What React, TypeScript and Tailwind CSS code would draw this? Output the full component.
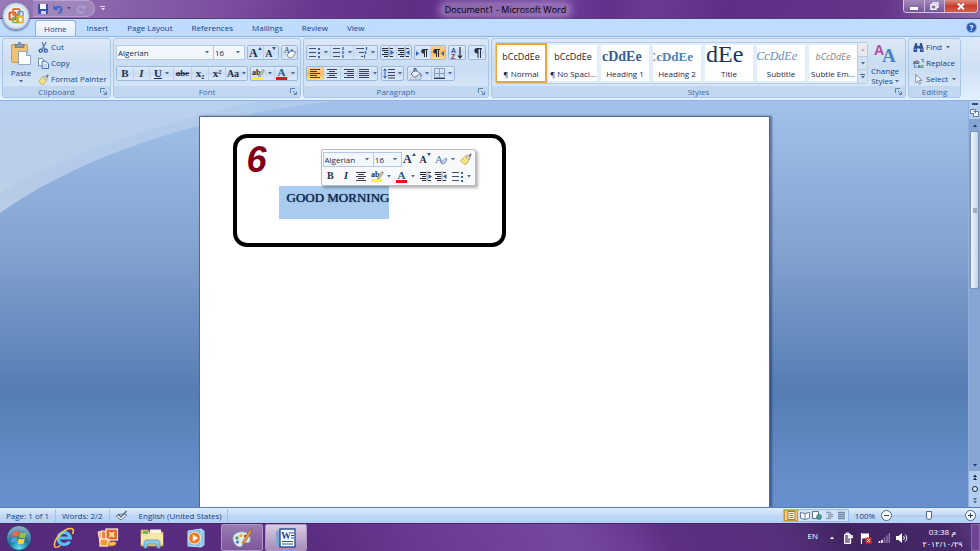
import React from 'react';
import clsx from 'clsx';

interface ChildrenProps {
  children?: React.ReactNode;
}

/* ---------- small building blocks ---------- */

const Caret = ({ className = 'text-[#4a6898]' }: { className?: string }) => (
  <svg viewBox="0 0 4 3" className={clsx('w-1 h-[3px] shrink-0', className)}>
    <path d="M0 0h4L2 2.500z" fill="currentColor" />
  </svg>
);

const Icon = ({ box = '0 0 12 12', className = 'w-3 h-3', children }: ChildrenProps & { box?: string; className?: string }) => (
  <svg viewBox={box} className={clsx('shrink-0', className)} fill="none">
    {children}
  </svg>
);

interface ToolProps extends ChildrenProps {
  label: string;
  arrow?: boolean;
  active?: boolean;
  className?: string;
}

const Tool = ({ label, arrow, active, className = 'flex-1', children }: ToolProps) => (
  <button
    type="button"
    aria-label={label}
    title={label}
    className={clsx(
      'h-full flex items-center justify-center gap-[3px] border-l border-[#bfd2ea] first:border-l-0',
      active && 'bg-linear-to-b from-[#fbd49a] via-[#fdb55b] to-[#fddf8e]',
      className,
    )}
  >
    {children}
    {arrow && <Caret />}
  </button>
);

const ToolSet = ({ className, children }: ChildrenProps & { className?: string }) => (
  <div className={clsx('h-[15px] flex items-stretch rounded-[2px] border border-[#9cb8dc] bg-linear-to-b from-[#dfebf9] via-[#c9dcf3] to-[#dbe9fa] overflow-hidden', className)}>
    {children}
  </div>
);

const Launcher = ({ label }: { label: string }) => (
  <button type="button" aria-label={label} className="absolute right-[3px] top-[2px]">
    <Icon box="0 0 7 7" className="w-[7px] h-[7px]">
      <path d="M.5 5V.5H5M3 3l3 3M6.500 3.500v3h-3" stroke="#5f83b5" />
    </Icon>
  </button>
);

const Group = ({ title, launcher, className, children }: ChildrenProps & { title: string; launcher?: boolean; className?: string }) => (
  <section
    aria-label={title}
    className={clsx('flex flex-col rounded-[3px] border border-[#a9c5e8] bg-linear-to-b from-[#dce8f6] via-[#c9dcf1] to-[#dcebfb] overflow-hidden', className)}
  >
    <div className="flex-1 min-h-0">{children}</div>
    <div className="relative h-[11px] flex items-center justify-center bg-[#c1d8f0] text-[#3e6aaa] leading-[11px]">
      {title}
      {launcher && <Launcher label={`${title} options`} />}
    </div>
  </section>
);

/* ---------- icons ---------- */

const Letter = ({ children, className }: ChildrenProps & { className?: string }) => (
  <span className={clsx('font-["Liberation_Serif",serif] font-bold leading-none text-[#1f2f4c]', className)}>{children}</span>
);

const GrowA = ({ down }: { down?: boolean }) => (
  <span className="flex items-start">
    <Letter className={down ? 'text-[10px] pt-[2px]' : 'text-[12px]'}>A</Letter>
    <Icon box="0 0 4 3" className="w-1 h-[3px]">
      <path d={down ? 'M0 0h4L2 3z' : 'M0 3h4L2 0z'} fill="#2c5799" />
    </Icon>
  </span>
);

const AlignIcon = ({ kind }: { kind: 'left' | 'center' | 'right' | 'justify' }) => {
  const short = { left: 'M1 3.500h7M1 7.500h7', center: 'M3 3.500h6M3 7.500h6', right: 'M4 3.500h7M4 7.500h7', justify: 'M1 3.500h10M1 7.500h10' }[kind];
  return (
    <Icon box="0 0 12 11" className="w-3 h-[11px]">
      <path d={`M1 1.500h10M1 5.500h10M1 9.500h10${short}`} stroke="#3d3f55" strokeWidth="1.200" />
    </Icon>
  );
};

const ListIcon = ({ kind }: { kind: 'bullets' | 'numbers' | 'levels' }) => (
  <Icon box="0 0 12 11" className="w-3 h-[11px]">
    {kind === 'levels' ? (
      <path d="M0 1.500h8M3 5.500h5M5 9.500h2" stroke="#4a4f63" strokeWidth="1.200" />
    ) : (
      <path d="M0 1.500h7M0 5.500h7M0 9.500h7" stroke="#4a4f63" strokeWidth="1.200" />
    )}
    {kind === 'bullets' && <path d="M9 1h2v2H9zM9 5h2v2H9zM9 9h2v2H9z" fill="#3465ad" />}
    {kind === 'numbers' && <path d="M10 0v3M10 4v3M10 8v3" stroke="#3465ad" strokeWidth="1.300" />}
    {kind === 'levels' && <path d="M10.500 0v3M9.500 4v3M8.500 8v3" stroke="#3465ad" strokeWidth="1.300" />}
  </Icon>
);

const IndentIcon = ({ out }: { out?: boolean }) => (
  <Icon box="0 0 12 11" className="w-3 h-[11px]">
    <path d="M0 1.500h6M0 3.500h6M2 5.500h4M0 7.500h6M2 9.500h4" stroke="#252a3a" />
    <path d="M7 .5v10" stroke="#252a3a" strokeDasharray="1 1" />
    <path d="M8 1.500h3M8 9.500h3" stroke="#252a3a" />
    <path d={out ? 'M8 5.500l3.500-2.500v5z' : 'M12 5.500L8.500 3v5z'} fill="#2b62b8" />
  </Icon>
);

const HighlightIcon = () => (
  <Icon box="0 0 13 12" className="w-[13px] h-3">
    <path d="M0 9h11v3H0z" fill="#ffff1e" />
    <text x="0" y="7" fontSize="8" fontWeight="bold" fontFamily="Liberation Serif" fill="#222d45">ab</text>
    <path d="M6.500 9l.8-3L11 1.500l1.500 1L9 7.500z" fill="#d8c58a" stroke="#6f7690" strokeWidth=".6" />
  </Icon>
);

const FontColorIcon = () => (
  <Icon box="0 0 12 13" className="w-3 h-[13px]">
    <path d="M0 10h11v3H0z" fill="#e8141c" />
    <text x="1.500" y="9" fontSize="11" fontWeight="bold" fontFamily="Liberation Serif" fill="#2d5597">A</text>
  </Icon>
);

const BrushIcon = ({ className = 'w-3 h-3' }: { className?: string }) => (
  <Icon className={className}>
    <path d="M8.500 3l2-2.800 1.200 1.100L9.700 4.500z" fill="#7f6a4a" />
    <path d="M5.500 3L8 2.200 10.300 5 9 7z" fill="#dfe6ef" stroke="#6b7890" strokeWidth=".6" />
    <path d="M5.500 3.200L9 7 6.500 11 4 11.500.5 7.500z" fill="#f2dc72" stroke="#a48427" strokeWidth=".5" />
    <path d="M2 8.500l4-3M4 10.500l3.500-4" stroke="#fff3bd" strokeWidth=".7" />
  </Icon>
);

const PasteIcon = () => (
  <Icon box="0 0 20 23" className="w-5 h-[23px]">
    <rect x=".5" y="2.500" width="16" height="18" rx="1.500" fill="#f0c273" stroke="#c99a4c" />
    <path d="M4 2.500h2.500l1-2h2l1 2H13v3H4z" fill="#8d99ab" stroke="#5c6880" strokeWidth=".6" />
    <path d="M7.500 9.500h8l4 4v9h-12z" fill="#fdfeff" stroke="#7d94b8" strokeWidth=".8" />
    <path d="M15.500 9.500v4h4" fill="#cddcef" stroke="#7d94b8" strokeWidth=".8" />
  </Icon>
);

const CutIcon = () => (
  <Icon className="w-[11px] h-[11px]">
    <path d="M4.500 0l2.700 8M9 0L4.500 8" stroke="#5477a8" strokeWidth="1.300" />
    <circle cx="3" cy="9.500" r="1.700" stroke="#234f9c" strokeWidth="1.300" />
    <circle cx="8.500" cy="9.500" r="1.700" stroke="#234f9c" strokeWidth="1.300" />
  </Icon>
);

const CopyIcon = () => (
  <Icon className="w-[11px] h-[11px]">
    <path d="M.5.500h4l2 2v6h-6z" fill="#f6faff" stroke="#5f80b4" />
    <path d="M4.500 3.500h4l3 3v5h-7z" fill="#e4eefb" stroke="#3f67a8" />
    <path d="M6 7.500h4M6 9.500h4" stroke="#8facd6" strokeWidth=".8" />
  </Icon>
);

const ClearIcon = () => (
  <Icon box="0 0 14 12" className="w-[14px] h-3">
    <text x="1" y="6" fontSize="8" fontFamily="Liberation Serif" fill="#2c3750">Aa</text>
    <path d="M4 8l4-4 5 1-3.500 5.500L6 11z" fill="#f4f6fa" stroke="#6d7890" strokeWidth=".8" />
  </Icon>
);

const DirIcon = ({ rtl }: { rtl?: boolean }) => (
  <Icon box="0 0 12 10" className="w-3 h-[10px]">
    <path d={rtl ? 'M12 3v5L9 5.500z' : 'M0 3v5l3-2.500z'} fill="#2f62b2" />
    <g transform={rtl ? 'translate(0 1)' : 'translate(4 1)'} fill="#2a2f3d">
      <path d="M3 0h5v1H7v7H6V1H5v7H4V4.500A2.200 2.200 0 0 1 3 0z" />
    </g>
  </Icon>
);

const SortIcon = () => (
  <Icon className="w-3 h-3">
    <text x="0" y="6" fontSize="7" fontWeight="bold" fontFamily="Liberation Sans" fill="#2c59a8">A</text>
    <text x="0" y="12" fontSize="7" fontWeight="bold" fontFamily="Liberation Sans" fill="#923043">Z</text>
    <path d="M9 0v11M7 8.500L9 11l2-2.500" stroke="#1f2737" strokeWidth="1.200" />
  </Icon>
);

const PilcrowIcon = () => (
  <Icon box="0 0 9 10" className="w-[9px] h-[10px]">
    <path d="M3.500 0H9v1.200H8V10H7V1.200H5.500V10h-1V5.500a2.800 2.800 0 0 1-1-5.500z" fill="#29344c" />
  </Icon>
);

const SpacingIcon = () => (
  <Icon box="0 0 12 11" className="w-3 h-[11px]">
    <path d="M5 1.500h7M5 4.500h7M5 7.500h7M5 10h7" stroke="#3d3f55" />
    <path d="M2 1v9M.5 3L2 .8 3.500 3M.5 8L2 10.200 3.500 8" stroke="#2f62b2" />
  </Icon>
);

const FillIcon = () => (
  <Icon box="0 0 13 12" className="w-[13px] h-3">
    <path d="M1 10h11v1.500H1z" fill="#fff" stroke="#8894a8" strokeWidth=".6" />
    <path d="M2 6l4.500-4.500L11 5.500 6 9.500z" fill="#e9eef6" stroke="#55647f" strokeWidth=".9" />
    <path d="M5 4V.500h2V4M11 5.500c1.500 1 1.500 2 .8 3.500" stroke="#2f5da6" />
  </Icon>
);

const BorderIcon = () => (
  <Icon box="0 0 11 11" className="w-[11px] h-[11px]">
    <path d="M.5.500h10v9H.5zM5.500.500v9M.5 5.500h10" stroke="#8d9db8" />
    <path d="M0 10.500h11" stroke="#303c54" />
  </Icon>
);

const ChangeStylesIcon = () => (
  <Icon box="0 0 22 22" className="w-[22px] h-[22px]">
    <text x="0" y="13" fontSize="14" fontWeight="bold" fontFamily="Liberation Sans" fill="#b04a9f">A</text>
    <text x="8" y="20" fontSize="19" fontWeight="bold" fontFamily="Liberation Serif" fill="#4a82c8">A</text>
  </Icon>
);

const FindIcon = () => (
  <Icon className="w-[11px] h-[11px]">
    <path d="M2.500 1h2v3h3V1h2l2 6v4h-4V7h-3v4h-4V7z" fill="#30558f" />
    <path d="M1.500 8h2M8.500 8h2" stroke="#a8c4ea" />
  </Icon>
);

const ReplaceIcon = () => (
  <Icon className="w-[11px] h-[11px]">
    <text x="0" y="6" fontSize="6" fontWeight="bold" fontFamily="Liberation Sans" fill="#33435f">ab</text>
    <text x="5" y="11" fontSize="6" fontWeight="bold" fontFamily="Liberation Sans" fill="#33723c">ac</text>
    <path d="M1.500 7v3H4M9 1.500h2V5" stroke="#3c6cb4" />
  </Icon>
);

const SelectIcon = () => (
  <Icon className="w-[11px] h-[11px]">
    <path d="M3 .5v9l2.200-2 1.600 3.700 1.600-.7L6.800 7H10z" fill="#fff" stroke="#586880" strokeWidth=".8" />
  </Icon>
);

/* ---------- title bar ---------- */

const OfficeButton = () => (
  <button type="button" aria-label="Office Button" className="absolute left-[2px] top-[2px] z-10 w-7 h-7 rounded-full border border-[#8398bd] bg-radial from-white via-[#e6edf6] to-[#a9bbd6] shadow-[0_1px_2px_rgba(30,40,90,0.6)] flex items-center justify-center">
    <Icon box="0 0 18 18" className="w-[18px] h-[18px]">
      <rect x="2.500" y="5.500" width="6" height="7" rx="1" stroke="#e0562a" strokeWidth="2" />
      <rect x="6" y="2" width="6.500" height="6" rx="1" stroke="#e9752b" strokeWidth="1.800" />
      <rect x="11" y="4.500" width="5" height="5" rx="1" stroke="#5b93d2" strokeWidth="1.400" />
      <rect x="10" y="9.500" width="6" height="6" rx="1" stroke="#efb52b" strokeWidth="2" />
      <rect x="5.500" y="10.500" width="5.500" height="5" rx="1" stroke="#7bb04a" strokeWidth="1.500" />
    </Icon>
  </button>
);

const windowButton = 'h-full flex items-center justify-center border-r border-[#cbb8d8] last:border-r-0';

const TitleBar = () => (
  <header className="h-[19px] flex items-start border-b border-[#54406f] bg-[linear-gradient(100deg,#9a7ab8_0%,#8560a8_14%,#7a4c9e_24%,#6a3790_32%,#5f2f86_42%,#7040a0_56%,#62308a_62%,#6c3a94_66%,#5f2f88_74%,#65358c_90%,#8c6aa8_100%)]">
    <div className="flex-1 flex items-center pl-[33px]">
      <div className="h-[17px] w-[62px] rounded-r-full border border-l-0 border-[#b9a2d0] bg-[#9e86bd] flex items-center gap-[5px] pl-[5px]">
        <button type="button" aria-label="Save">
          <Icon box="0 0 10 10" className="w-[10px] h-[10px]">
            <path d="M0 0h10v10H1L0 9z" fill="#3a4fae" />
            <path d="M2 0h6v5H2z" fill="#f2f6ff" />
            <path d="M3 7h5v3H3z" fill="#cdd6f0" />
          </Icon>
        </button>
        <button type="button" aria-label="Undo" className="flex items-center gap-1">
          <Icon box="0 0 10 10" className="w-[10px] h-[10px]">
            <path d="M2 4.500C4.500 1.500 9 3 8.500 6c-.2 1.800-1.500 2.800-3 3.500" stroke="#3f66c4" strokeWidth="2" />
            <path d="M0 1l1 5.500 4.500-1z" fill="#3f66c4" />
          </Icon>
          <Caret className="text-[#4a4f8e]" />
        </button>
        <button type="button" aria-label="Repeat" className="opacity-50">
          <Icon box="0 0 10 10" className="w-[10px] h-[10px]">
            <path d="M7.500 3C4.500.8 1 3 1.500 6s4 3.500 6 1.500" stroke="#b5b3dc" strokeWidth="2" />
            <path d="M9.500.500V5.500L5 4z" fill="#b5b3dc" />
          </Icon>
        </button>
      </div>
      <button type="button" aria-label="Customize Quick Access Toolbar" className="ml-[5px] flex flex-col items-center gap-[1px]">
        <span className="w-[5px] h-[1px] bg-[#e4d8f0]" />
        <Caret className="text-[#e4d8f0]" />
      </button>
    </div>
    <h1 className="h-[18px] flex items-center text-[9px] text-black"><span className="px-1 leading-[13px] rounded-full bg-[#c9b2da]/40 shadow-[0_0_6px_3px_rgba(201,178,218,0.4)]">Document1 - Microsoft Word</span></h1>
    <div className="flex-1 flex justify-end pr-[2px]">
      <div className="h-[13px] w-[75px] flex rounded-b-[4px] border border-t-0 border-[#d2c3de] overflow-hidden">
        <button type="button" aria-label="Minimize" className={clsx(windowButton, 'w-[21px] bg-linear-to-b from-[#a58bbb] to-[#75559a]')}>
          <span className="w-2 h-[3px] mt-1 bg-white" />
        </button>
        <button type="button" aria-label="Restore" className={clsx(windowButton, 'w-[20px] bg-linear-to-b from-[#a58bbb] to-[#75559a]')}>
          <Icon box="0 0 9 8" className="w-[9px] h-2">
            <path d="M3 2V.800h5v4.500H6.500" stroke="#fff" strokeWidth="1.300" />
            <path d="M1 2.800h5v4.500H1z" stroke="#fff" strokeWidth="1.500" />
          </Icon>
        </button>
        <button type="button" aria-label="Close" className={clsx(windowButton, 'flex-1 bg-linear-to-b from-[#dc8c80] via-[#c8392c] to-[#d5604a]')}>
          <Icon box="0 0 8 7" className="w-2 h-[7px]">
            <path d="M1 .5l6 6M7 .5l-6 6" stroke="#fff" strokeWidth="2" />
          </Icon>
        </button>
      </div>
    </div>
  </header>
);

/* ---------- tabs ---------- */

const TABS = ['Home', 'Insert', 'Page Layout', 'References', 'Mailings', 'Review', 'View'];

const TabRow = () => (
  <nav className="h-[17px] pl-[35px] pr-1 flex items-end gap-[3px] bg-[#bfdbff]">
    {TABS.map((tab, i) => (
      <button
        key={tab}
        type="button"
        className={clsx(
          'h-4 px-2 flex items-center text-[#15428b]',
          i === 0 && 'rounded-t-[3px] border border-b-0 border-[#8fb2e2] bg-linear-to-b from-[#f6faff] to-[#dfeafa]',
        )}
      >
        {tab}
      </button>
    ))}
    <button type="button" aria-label="Help" className="ml-auto mb-1 w-[9px] h-[9px] rounded-full bg-[#2a5cb4] ring-1 ring-[#8fabd8] text-white font-bold leading-[9px] flex items-center justify-center">
      ?
    </button>
  </nav>
);

/* ---------- ribbon ---------- */

const RowButton = ({ icon, arrow, children }: ChildrenProps & { icon: React.ReactNode; arrow?: boolean }) => (
  <button type="button" className="h-4 flex items-center gap-[2px] text-[#15428b] whitespace-nowrap">
    {icon}
    {children}
    {arrow && <span className="pl-[2px]"><Caret /></span>}
  </button>
);

const ClipboardGroup = () => (
  <Group title="Clipboard" launcher className="w-[109px]">
    <div className="flex pl-[6px] gap-[5px]">
      <button type="button" className="w-[24px] pt-[3px] flex flex-col items-center text-[#15428b]">
        <PasteIcon />
        <span className="leading-[15px]">Paste</span>
        <Caret />
      </button>
      <div>
        <RowButton icon={<CutIcon />}>Cut</RowButton>
        <RowButton icon={<CopyIcon />}>Copy</RowButton>
        <RowButton icon={<BrushIcon className="w-[11px] h-[11px]" />}>Format Painter</RowButton>
      </div>
    </div>
  </Group>
);

interface ComboProps {
  label: string;
  value: string;
  className?: string;
}

const Combo = ({ label, value, className }: ComboProps) => (
  <label className={clsx('h-[15px] flex items-center border border-[#b3c9e8] bg-[#f2f7fd] pr-1', className)}>
    <select aria-label={label} defaultValue={value} className="flex-1 min-w-0 h-full pl-[1px] appearance-none bg-transparent text-[#1c2a44] leading-[13px] outline-none">
      <option>{value}</option>
    </select>
    <Caret />
  </label>
);

const FontGroup = () => (
  <Group title="Font" launcher className="w-[188px]">
    <div className="h-full pt-[6px] px-[2px] flex flex-col gap-[6px]">
      <div className="flex">
        <Combo label="Font" value="Algerian" className="w-[98px]" />
        <Combo label="Font Size" value="16" className="w-[31px] border-l-0" />
        <ToolSet className="w-[32px] ml-[2px]">
          <Tool label="Grow Font"><GrowA /></Tool>
          <Tool label="Shrink Font"><GrowA down /></Tool>
        </ToolSet>
        <ToolSet className="w-[17px] ml-auto">
          <Tool label="Clear Formatting"><ClearIcon /></Tool>
        </ToolSet>
      </div>
      <div className="flex justify-between">
        <ToolSet className="w-[132px]">
          <Tool label="Bold" className="w-4"><Letter className="text-[11px]">B</Letter></Tool>
          <Tool label="Italic" className="w-4"><Letter className="text-[11px] italic">I</Letter></Tool>
          <Tool label="Underline" arrow className="w-[24px]"><Letter className="text-[11px] underline">U</Letter></Tool>
          <Tool label="Strikethrough" className="w-[18px]"><Letter className="text-[9px] line-through">abc</Letter></Tool>
          <Tool label="Subscript" className="w-[17px]"><Letter className="text-[11px]">x<sub className="text-[6px]">2</sub></Letter></Tool>
          <Tool label="Superscript" className="w-[17px]"><Letter className="text-[11px]">x<sup className="text-[6px]">2</sup></Letter></Tool>
          <Tool label="Change Case" arrow><Letter className="text-[10px]">Aa</Letter></Tool>
        </ToolSet>
        <ToolSet className="w-[48px]">
          <Tool label="Text Highlight Color" arrow><HighlightIcon /></Tool>
          <Tool label="Font Color" arrow><FontColorIcon /></Tool>
        </ToolSet>
      </div>
    </div>
  </Group>
);

const ParagraphGroup = () => (
  <Group title="Paragraph" launcher className="w-[186px]">
    <div className="h-full pt-[6px] px-[2px] flex flex-col gap-[6px]">
      <div className="flex justify-between">
        <ToolSet className="w-[72px]">
          <Tool label="Bullets" arrow><ListIcon kind="bullets" /></Tool>
          <Tool label="Numbering" arrow><ListIcon kind="numbers" /></Tool>
          <Tool label="Multilevel List" arrow><ListIcon kind="levels" /></Tool>
        </ToolSet>
        <ToolSet className="w-[32px]">
          <Tool label="Decrease Indent"><IndentIcon /></Tool>
          <Tool label="Increase Indent"><IndentIcon out /></Tool>
        </ToolSet>
        <ToolSet className="w-[32px]">
          <Tool label="Left-to-Right"><DirIcon /></Tool>
          <Tool label="Right-to-Left" active><DirIcon rtl /></Tool>
        </ToolSet>
        <ToolSet className="w-[18px]">
          <Tool label="Sort"><SortIcon /></Tool>
        </ToolSet>
        <ToolSet className="w-[18px]">
          <Tool label="Show/Hide"><PilcrowIcon /></Tool>
        </ToolSet>
      </div>
      <div className="flex gap-[3px]">
        <ToolSet className="w-[72px]">
          <Tool label="Align Left" active className="w-4"><AlignIcon kind="left" /></Tool>
          <Tool label="Center" className="w-[17px]"><AlignIcon kind="center" /></Tool>
          <Tool label="Align Right" className="w-[17px]"><AlignIcon kind="right" /></Tool>
          <Tool label="Justify" arrow><AlignIcon kind="justify" /></Tool>
        </ToolSet>
        <ToolSet className="w-[23px]">
          <Tool label="Line Spacing" arrow><SpacingIcon /></Tool>
        </ToolSet>
        <ToolSet className="w-[48px]">
          <Tool label="Shading" arrow><FillIcon /></Tool>
          <Tool label="Borders" arrow><BorderIcon /></Tool>
        </ToolSet>
      </div>
    </div>
  </Group>
);

const STYLES = [
  { name: '¶ Normal', sample: 'bCcDdEe', look: 'text-[9px] leading-[23px] text-[#222222] justify-center' },
  { name: '¶ No Spaci...', sample: 'bCcDdEe', look: 'text-[9px] leading-[23px] text-[#222222] justify-center' },
  { name: 'Heading 1', sample: 'cDdEe', look: 'font-["Liberation_Serif",serif] text-[14px] leading-[23px] font-bold text-[#365f91] justify-start pl-[1px]' },
  { name: 'Heading 2', sample: 'CcDdEe', look: 'font-["Liberation_Serif",serif] text-[13px] leading-[23px] font-bold text-[#4f81bd] justify-end pr-2' },
  { name: 'Title', sample: 'dEe', look: 'font-["Liberation_Serif",serif] text-[24px] leading-[18px] text-[#17365d] justify-start pl-[1px]' },
  { name: 'Subtitle', sample: 'CcDdEe', look: 'font-["Liberation_Serif",serif] text-[12px] leading-[23px] italic text-[#5f8cc4] justify-end pr-2' },
  { name: 'Subtle Em...', sample: 'bCcDdEe', look: 'text-[9px] leading-[23px] italic text-[#808080] justify-center' },
];

const StylesGroup = () => (
  <Group title="Styles" launcher className="flex-1 min-w-0">
    <div className="pt-[3px] pl-[3px] pr-[3px] flex">
      <div className="flex-1 h-[42px] flex justify-between rounded-[3px] border border-[#b5cdea] bg-[#e3eefb]">
        <div className="flex gap-1 py-[2px] pl-[1px] overflow-hidden">
          {STYLES.map((style, i) => (
            <button
              key={style.name}
              type="button"
              className={clsx(
                'w-12 h-9 flex flex-col items-center bg-white overflow-hidden shrink-0',
                i === 0 && 'outline-2 outline-[#e9a73c]',
              )}
            >
              <span className={clsx('w-full h-[23px] flex items-start overflow-hidden whitespace-nowrap', style.look)}>
                {style.sample}
              </span>
              <span className="leading-[11px] text-[#1e1e50] whitespace-nowrap">{style.name}</span>
            </button>
          ))}
        </div>
        <div className="w-[10px] flex flex-col border-l border-[#b5cdea] bg-[#d3e2f5]">
          <button type="button" aria-label="Previous row" className="flex-1 flex items-center justify-center bg-[#e9eaee]">
            <Caret className="rotate-180 text-[#b3b3bd]" />
          </button>
          <button type="button" aria-label="Next row" className="flex-1 flex items-center justify-center border-y border-[#b5cdea]">
            <Caret />
          </button>
          <button type="button" aria-label="More styles" className="flex-1 flex flex-col gap-[1px] items-center justify-center">
            <span className="w-[5px] h-[1px] bg-[#3f5f92]" />
            <Caret />
          </button>
        </div>
      </div>
      <button type="button" className="w-[34px] flex flex-col items-center text-[#15428b] leading-[10px]">
        <ChangeStylesIcon />
        <span className="pt-[2px]">Change</span>
        <span className="flex items-center gap-[2px]">Styles <Caret /></span>
      </button>
    </div>
  </Group>
);

const EditingGroup = () => (
  <Group title="Editing" className="w-[53px]">
    <div className="pl-1">
      <RowButton icon={<FindIcon />} arrow>Find</RowButton>
      <RowButton icon={<ReplaceIcon />}>Replace</RowButton>
      <RowButton icon={<SelectIcon />} arrow>Select</RowButton>
    </div>
  </Group>
);

const Ribbon = () => (
  <div className="h-[65px] flex gap-[2px] pt-[1px] pb-[2px] pl-[2px] pr-[19px] border-y border-[#8db2e3] bg-linear-to-b from-[#dde9f7] via-[#cfe0f4] to-[#e2f1ff]">
    <ClipboardGroup />
    <FontGroup />
    <ParagraphGroup />
    <StylesGroup />
    <EditingGroup />
  </div>
);

/* ---------- document ---------- */

const miniTool = 'h-full flex items-center justify-center gap-[3px]';

const MiniButton = ({ label, arrow, children }: ToolProps) => (
  <button type="button" aria-label={label} className={clsx(miniTool, arrow ? 'w-[25px]' : 'w-4')}>
    {children}
    {arrow && <Caret />}
  </button>
);

const MiniToolbar = () => (
  <div className="absolute left-[84px] top-[11px] w-[155px] h-[37px] flex flex-col justify-between rounded-[2px] border border-[#b8bcc4] bg-[#f8f9fb] p-[1px] shadow-[2px_2px_3px_rgba(0,0,0,0.3)]">
    <div className="h-4 flex items-center">
      <Combo label="Mini font" value="Algerian" className="w-[52px]" />
      <Combo label="Mini font size" value="16" className="w-[28px] border-l-0" />
      <MiniButton label="Grow Font"><GrowA /></MiniButton>
      <MiniButton label="Shrink Font"><GrowA down /></MiniButton>
      <MiniButton label="Quick Styles" arrow>
        <Icon box="0 0 14 12" className="w-[13px] h-3">
          <text x="0" y="10" fontSize="12" fontFamily="Liberation Serif" fill="#4579c4">A</text>
          <path d="M7 9l5-4 1 2-3 4H7z" fill="#c6d8f1" stroke="#4c6fa5" strokeWidth=".7" />
        </Icon>
      </MiniButton>
      <MiniButton label="Format Painter"><BrushIcon /></MiniButton>
    </div>
    <div className="h-4 flex items-center">
      <MiniButton label="Bold"><Letter className="text-[10px]">B</Letter></MiniButton>
      <MiniButton label="Italic"><Letter className="text-[10px] italic">I</Letter></MiniButton>
      <MiniButton label="Center"><AlignIcon kind="center" /></MiniButton>
      <MiniButton label="Highlight" arrow><HighlightIcon /></MiniButton>
      <MiniButton label="Font Color" arrow><FontColorIcon /></MiniButton>
      <MiniButton label="Decrease Indent"><IndentIcon /></MiniButton>
      <MiniButton label="Increase Indent"><IndentIcon out /></MiniButton>
      <MiniButton label="Bullets" arrow><ListIcon kind="bullets" /></MiniButton>
    </div>
  </div>
);

const Page = () => (
  <article className="relative w-[571px] mt-[15px] pl-[33px] pt-[17px] border border-b-0 border-[#56688a] bg-white shadow-[2px_0_2px_rgba(20,40,90,0.5)]">
    <div className="relative w-[273px] h-[113px] rounded-[14px] border-4 border-black">
      <p className="pl-[10px] pt-[4px] h-[48px] font-['Liberation_Sans',sans-serif] text-[36px] leading-[36px] font-bold italic text-[#800018]">6</p>
      <p className="ml-[42px] w-fit h-[33px] pl-2 bg-[#a9cbf0] font-['Liberation_Serif',serif] text-[13px] leading-[24px] text-[#10284c] [text-shadow:0_0_1px_#10284c]">GOOD MORNING</p>
      <MiniToolbar />
    </div>
  </article>
);

const Swoosh = () => (
  <svg viewBox="0 0 340 120" className="absolute left-0 top-0 w-[340px] h-[120px]" aria-hidden="true">
    <defs>
      <linearGradient id="swoosh" x1="0" y1="0" x2="0" y2="1">
        <stop offset="0" stopColor="#fff" stopOpacity=".15" />
        <stop offset="1" stopColor="#fff" stopOpacity=".4" />
      </linearGradient>
    </defs>
    <path d="M0 0h335C200 15 80 55 0 112z" fill="url(#swoosh)" />
    <path d="M0 0h260C170 20 70 50 0 92z" fill="#fff" fillOpacity=".1" />
  </svg>
);

const ScrollBar = () => (
  <aside className="w-3 flex flex-col items-center bg-[#b4cdee] border-l border-[#8fb0dc]">
    <span className="w-[6px] h-[2px] mt-[2px] bg-[#2e4f8c]" />
    <button type="button" aria-label="View Ruler" className="h-[14px] flex items-center">
      <Icon box="0 0 9 9" className="w-[9px] h-[9px]">
        <path d="M.5 1.500h5v2h3v5h-5v-3h-3z" fill="#f4f8ff" stroke="#46618f" strokeWidth=".8" />
        <path d="M3.500 3.500h2v2" stroke="#46618f" strokeWidth=".8" />
      </Icon>
    </button>
    <div className="flex-1 w-full flex flex-col items-center bg-[#86a5d3]">
      <button type="button" aria-label="Scroll up" className="h-[12px] flex items-center">
        <Caret className="rotate-180 text-[#1e3a72]" />
      </button>
      <div className="w-[9px] h-[158px] border border-[#7c93b8] rounded-[2px] bg-linear-to-r from-[#f4f8fd] to-[#c3d0e4] flex items-center justify-center">
        <span className="w-[4px] h-[5px] bg-[#a2acbd]" />
      </div>
      <button type="button" aria-label="Scroll down" className="h-[12px] mt-auto flex items-center">
        <Caret className="text-[#1e3a72]" />
      </button>
    </div>
    <div className="h-[36px] flex flex-col items-center justify-around text-[#14264c]">
      <button type="button" aria-label="Previous Page" className="flex flex-col"><Caret className="rotate-180" /><Caret className="rotate-180" /></button>
      <button type="button" aria-label="Select Browse Object" className="w-[6px] h-[6px] rounded-full border border-[#14264c] bg-[#dbe8fa]" />
      <button type="button" aria-label="Next Page" className="flex flex-col"><Caret /><Caret /></button>
    </div>
  </aside>
);

const Workspace = () => (
  <main className="flex-1 flex bg-[linear-gradient(180deg,#a3c2ea_0%,#7f9fcd_40%,#557db4_71%,#668fcb_94%,#6690cd_100%)]">
    <div className="relative flex-1 flex justify-center overflow-hidden">
      <Swoosh />
      <Page />
    </div>
    <ScrollBar />
  </main>
);

/* ---------- status bar ---------- */

const cell = 'h-[13px] flex items-center border-r border-[#a3bfe4] text-[#15428b]';

const StatusBar = () => (
  <footer className="h-4 flex items-center border-t border-[#567db1] bg-linear-to-b from-[#e0edfd] via-[#c0d8f6] to-[#b3cff2]">
    <button type="button" className={clsx(cell, 'px-[6px]')}>Page: 1 of 1</button>
    <button type="button" className={clsx(cell, 'px-[6px]')}>Words: 2/2</button>
    <button type="button" aria-label="Proofing" className="w-[29px] h-[13px] flex items-center pl-[5px]">
      <Icon box="0 0 13 11" className="w-[13px] h-[11px]">
        <path d="M1 6l5-2 6 1-6 5z" fill="#fff" stroke="#5f7193" strokeWidth=".9" />
        <path d="M3 4l3 3L11.500 1" stroke="#4a638f" strokeWidth="1.300" />
      </Icon>
    </button>
    <button type="button" className={clsx(cell, 'pr-[5px]')}>English (United States)</button>
    <div className="ml-auto flex items-center text-[#15428b]">
      <div className="w-[66px] h-[13px] flex border border-[#9dbbe2] bg-[#d2e2f6]">
        <button type="button" aria-label="Print Layout" className="flex-1 flex items-center justify-center bg-[#fbcb7c] border border-[#c89340]">
          <Icon box="0 0 9 9" className="w-[9px] h-[9px]"><path d="M1 .500h7v8H1zM2.500 2.500h4M2.500 4.500h4M2.500 6.500h4" stroke="#7c6238" strokeWidth=".8" fill="#fff6df" /></Icon>
        </button>
        <button type="button" aria-label="Full Screen Reading" className="flex-1 flex items-center justify-center">
          <Icon box="0 0 10 9" className="w-[10px] h-[9px]"><path d="M.5 1.500L5 2.500l4.500-1v5.500L5 8.500.5 7zM5 2.500v6" stroke="#5a6f94" fill="#fff" strokeWidth=".9" /></Icon>
        </button>
        <button type="button" aria-label="Web Layout" className="flex-1 flex items-center justify-center">
          <Icon box="0 0 10 9" className="w-[10px] h-[9px]"><path d="M.5.500h6v7h-6z" fill="#fff" stroke="#5a6f94" /><circle cx="7" cy="6" r="2.500" fill="#4ba08a" stroke="#2d5d92" strokeWidth=".6" /></Icon>
        </button>
        <button type="button" aria-label="Outline" className="flex-1 flex items-center justify-center">
          <Icon box="0 0 9 9" className="w-[9px] h-[9px]"><path d="M1 1.500h5M3 3.500h5M3 5.500h5M1 7.500h5" stroke="#8fa0bd" strokeWidth="1.400" /></Icon>
        </button>
        <button type="button" aria-label="Draft" className="flex-1 flex items-center justify-center">
          <Icon box="0 0 9 9" className="w-[9px] h-[9px]"><path d="M1 1.500h7M1 3.500h7M1 5.500h7M1 7.500h7" stroke="#7589a9" strokeWidth="1.500" /></Icon>
        </button>
      </div>
      <button type="button" className="w-[32px] text-center">100%</button>
      <button type="button" aria-label="Zoom Out" className="w-[11px] h-[11px] rounded-full border border-[#46679b] bg-white flex items-center justify-center">
        <span className="w-[5px] h-[1px] bg-[#24406f]" />
      </button>
      <input
        type="range"
        aria-label="Zoom"
        defaultValue={50}
        className="w-[73px] h-3 appearance-none bg-linear-to-b from-transparent from-45% via-[#6d8fc0] via-50% to-transparent to-55% [&::-webkit-slider-thumb]:appearance-none [&::-webkit-slider-thumb]:w-[6px] [&::-webkit-slider-thumb]:h-[9px] [&::-webkit-slider-thumb]:rounded-b-[3px] [&::-webkit-slider-thumb]:border [&::-webkit-slider-thumb]:border-[#46679b] [&::-webkit-slider-thumb]:bg-white"
      />
      <button type="button" aria-label="Zoom In" className="w-[11px] h-[11px] mr-1 rounded-full border border-[#46679b] bg-white flex items-center justify-center">
        <Icon box="0 0 5 5" className="w-[5px] h-[5px]"><path d="M0 2.500h5M2.500 0v5" stroke="#24406f" /></Icon>
      </button>
    </div>
  </footer>
);

/* ---------- taskbar ---------- */

const pinned = 'w-[44px] h-full flex items-center justify-center';
const running = 'w-[42px] h-full flex items-center justify-center rounded-[2px] border border-[#b096c4]';

const Taskbar = () => (
  <div className="h-[28px] flex items-center bg-[linear-gradient(60deg,#552a7b_0%,#5a2d82_32%,#6b3c94_45%,#7548a0_58%,#6a3c94_64%,#5c2f84_68%,#55307a_80%,#3f2460_86%,#452868_96%,#5a3a80_100%)] border-t border-[#47246b] text-white">
    <button type="button" aria-label="Start" className="w-[42px] h-full flex items-center justify-center pr-1">
      <Icon box="0 0 26 26" className="w-[26px] h-[26px]">
        <defs>
          <radialGradient id="orb" cx=".5" cy=".9" r=".9">
            <stop offset="0" stopColor="#62e0f0" />
            <stop offset=".45" stopColor="#1f6fa0" />
            <stop offset="1" stopColor="#9ab4cc" />
          </radialGradient>
        </defs>
        <circle cx="13" cy="13" r="12.500" fill="url(#orb)" stroke="#223a66" />
        <path d="M7.300 7c2.200-1.200 4-1 6 0l-1.300 5c-2-1-4-1-6 0z" fill="#ee6a36" />
        <path d="M14.200 7.500c2.200 1 4.200 1 6.300 0l-1.300 5c-2.200 1-4.200 1-6.200 0z" fill="#8fc642" />
        <path d="M5.700 13c2.200-1 4.200-1 6 0l-1.300 5c-2-1-4-1-6 0z" fill="#4aa0e6" />
        <path d="M12.700 13.500c2.200 1 4.200 1 6.200 0l-1.300 5c-2.200 1-4.200 1-6.200 0z" fill="#fbd035" />
      </Icon>
    </button>
    <button type="button" aria-label="Internet Explorer" className={pinned}>
      <Icon box="0 0 22 22" className="w-[22px] h-[22px]">
        <path d="M16.500 14.500a6 6 0 1 1 .8-3.500H7" stroke="#55c3f3" strokeWidth="3.200" />
        <path d="M2 20C-1 14 10 2 17.500 1.500c4-.2 3 3.500 2 5.500" stroke="#f4c941" strokeWidth="1.600" />
        <path d="M2 20c1.500 1 4-.5 5.500-1.800" stroke="#f4c941" strokeWidth="1.400" />
      </Icon>
    </button>
    <button type="button" aria-label="Media Gallery" className={pinned}>
      <Icon box="0 0 22 20" className="w-[22px] h-5">
        <path d="M1 4l5-1v12l-3-1z" fill="#f0b98b" stroke="#fbe3cc" />
        <rect x="4.500" y="3" width="8" height="12" fill="#e98a4d" stroke="#fbe3cc" />
        <rect x="9" y="1" width="11.500" height="11" fill="#e85f28" stroke="#fff1de" strokeWidth="1.200" />
        <path d="M11.500 3.500l3.200 1 3.300-1-1 3 1 3.200-3.300-1-3.200 1 1-3.200z" fill="#ffd78a" />
        <rect x="3" y="11" width="8" height="7" fill="#f39b33" stroke="#fff1de" strokeWidth="1.200" />
        <path d="M12 14c3 0 6-1 7.500 1-1 3-5 3.500-8 2.500z" fill="#f6c04a" stroke="#c4711b" strokeWidth=".6" />
      </Icon>
    </button>
    <button type="button" aria-label="Windows Explorer" className={pinned}>
      <Icon box="0 0 24 22" className="w-6 h-[22px]">
        <path d="M1 3h7l1 2h14v14H1z" fill="#ecd07c" stroke="#c9a34a" strokeWidth=".8" />
        <path d="M3 4h5v3H3z" fill="#6fb26a" />
        <path d="M10 2.500h11v4H10z" fill="#f7f4e0" />
        <path d="M1 7h22v10H1z" fill="#f8e6a6" />
        <path d="M4 21v-5c0-2 1-3 3-3h10c2 0 3 1 3 3v5h-3v-4H7v4z" fill="#8ccbea" stroke="#4f95c2" strokeWidth=".8" />
      </Icon>
    </button>
    <button type="button" aria-label="Windows Media Player" className={pinned}>
      <Icon box="0 0 20 20" className="w-5 h-5">
        <path d="M2 3l13-2 3 2v14l-3 2-13-1z" fill="#7fc3ec" stroke="#b7dff5" />
        <path d="M15 1v18" stroke="#cfeaf8" strokeWidth=".8" />
        <circle cx="8.500" cy="10" r="6" fill="#ee7a24" stroke="#fff0dc" />
        <path d="M6.800 6.500v7L12 10z" fill="#fff" />
      </Icon>
    </button>
    <div className="h-full flex gap-[2px] pl-[3px]">
      <button type="button" aria-label="Paint" className={clsx(running, 'bg-linear-to-b from-[#9a7cb2] to-[#7c569b]')}>
        <Icon box="0 0 22 20" className="w-[22px] h-5">
          <path d="M2 12C1 6 7 3 13 4c5 1 7 5 6 9-1 3-4 1-6 2s-1 4-4 4-6-3-7-7z" fill="#dcebf5" stroke="#7d9cb8" strokeWidth=".8" />
          <circle cx="6" cy="10" r="1.700" fill="#4c9e4a" />
          <circle cx="10" cy="7.500" r="1.700" fill="#e8b531" />
          <circle cx="6.500" cy="14" r="1.600" fill="#3b79c8" />
          <circle cx="14.500" cy="8" r="1.600" fill="#d2452f" />
          <path d="M11 15L18 3l3-2-1 4-7 11z" fill="#e29a3e" stroke="#935a1f" strokeWidth=".6" />
        </Icon>
      </button>
      <button type="button" aria-label="Microsoft Word" className={clsx(running, 'bg-linear-to-b from-[#d9cce2] to-[#a58bba]')}>
        <Icon box="0 0 22 20" className="w-[22px] h-5">
          <path d="M1 3.500L6 1v18l-5-2z" fill="#7fa3d4" />
          <path d="M5 1h15v18H5z" fill="#fff" stroke="#2b5397" strokeWidth="1.400" />
          <text x="6" y="11" fontSize="10" fontWeight="bold" fontFamily="Liberation Serif" fill="#1f4a95">W</text>
          <path d="M16 5h3M16 7.500h3M16 10h3M7 13.500h11M7 16h11" stroke="#2b5397" />
        </Icon>
      </button>
    </div>
    <div className="ml-auto h-full flex items-center">
      <button type="button" className="pr-[12px] pb-[3px]">EN</button>
      <button type="button" aria-label="Show hidden icons" className="pr-[9px]"><Caret className="rotate-180 text-white" /></button>
      <div className="flex items-center gap-[6px]">
        <Icon box="0 0 11 12" className="w-[11px] h-3">
          <path d="M1.500 2.500h6v9h-6zM3 1h3v1.500H3z" stroke="#fff" fill="#8e7ba3" />
          <path d="M5 5.500h5M6 3v3M9 3v3M7.500 8v3" stroke="#fff" strokeWidth="1.500" />
        </Icon>
        <Icon box="0 0 12 12" className="w-3 h-3">
          <path d="M1.500 1v11" stroke="#fff" strokeWidth="1.200" />
          <path d="M2 1.500h7v5H2z" fill="#fff" />
          <path d="M5.500 5.500h6v6h-6z" fill="#d8342b" />
          <path d="M7 7l3 3M10 7l-3 3" stroke="#fff" />
        </Icon>
        <Icon box="0 0 12 12" className="w-3 h-3">
          <path d="M1.500 9v2M4 7.500V11M6.500 5.500V11M9 3.500V11M11.300 1v10" stroke="#8b72a3" strokeWidth="1.500" />
          <path d="M1.500 9v2M4 8v3" stroke="#fff" strokeWidth="1.500" />
        </Icon>
        <Icon box="0 0 12 12" className="w-3 h-3">
          <path d="M0 4h2.500L6 1v10L2.500 8H0z" fill="#fff" />
          <path d="M7.500 4c1 1 1 3 0 4M9.200 2.500c2 2 2 5 0 7" stroke="#fff" />
        </Icon>
      </div>
      <button type="button" className="w-[63px] pl-[6px] flex flex-col items-center font-['Open_Sans','DejaVu_Sans',sans-serif] leading-3">
        <span>03:38 م</span>
        <span>٢٠١٢/١٠/٢٩</span>
      </button>
      <button type="button" aria-label="Show desktop" className="w-[9px] h-full border border-[#8b6aa6] bg-[#6e4492]" />
    </div>
  </div>
);

export default function App() {
  return (
    <div className="relative min-h-screen w-full flex flex-col font-['Open_Sans','Noto_Sans',sans-serif] text-[8px] leading-[12px] overflow-hidden">
      <OfficeButton />
      <TitleBar />
      <TabRow />
      <Ribbon />
      <Workspace />
      <StatusBar />
      <Taskbar />
    </div>
  );
}
